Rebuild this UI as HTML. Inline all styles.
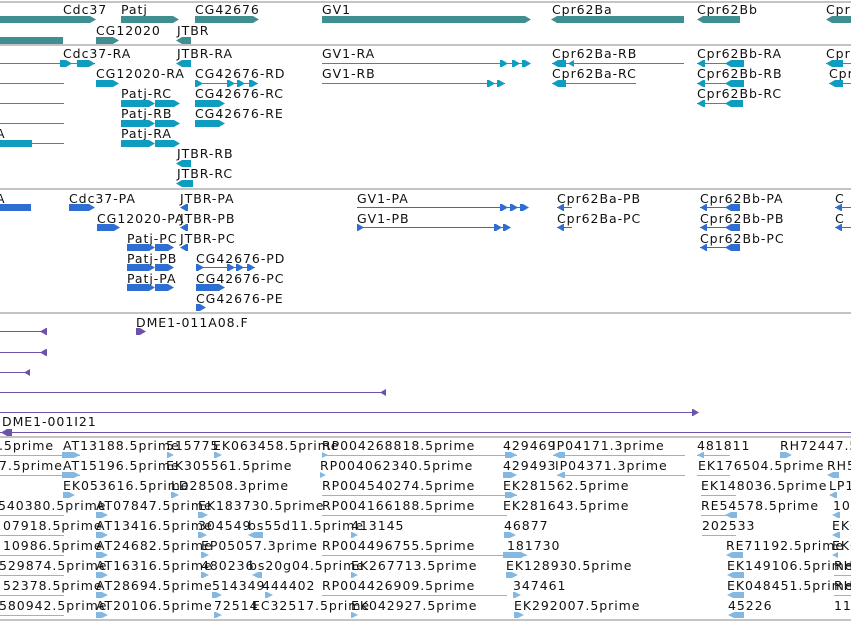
<!DOCTYPE html>
<html style="overflow:hidden"><head><meta charset="utf-8"><style>
html,body{overflow:hidden}
body{margin:0;width:851px;height:621px;background:#fff;position:relative;font-family:"DejaVu Sans","Liberation Sans",sans-serif}
#w{position:absolute;left:0;top:0;width:851px;height:621px;overflow:hidden}
.t{position:absolute;font-size:12.5px;line-height:14px;letter-spacing:.95px;white-space:nowrap;color:#111;margin-top:1px}
.s{position:absolute;left:0;width:851px;height:2px;background:#c4c4c4}
.l{position:absolute;height:1px}
.b{position:absolute;height:7px}
.ar{clip-path:polygon(0 0,calc(100% - 6px) 0,100% 50%,calc(100% - 6px) 100%,0 100%)}
.al{clip-path:polygon(6px 0,100% 0,100% 100%,6px 100%,0 50%)}
.g .l,.g .b{background:#3f8f91}
.r .l,.r .b{background:#0e9cc0}
.p .l,.p .b{background:#2e6ed2}
.u .l,.u .b{background:#6c52aa}
.e .l,.e .b{background:#84b8e0}
.e .b{height:6px}
</style></head><body><div id="w">
<div class="s" style="top:1px"></div>
<div class="s" style="top:44px"></div>
<div class="s" style="top:188px"></div>
<div class="s" style="top:312px"></div>
<div class="s" style="top:436px"></div>
<div class="s" style="top:619px"></div>

<!-- genes -->
<div class="g">
<div class="t" style="left:63px;top:2px">Cdc37</div><div class="t" style="left:121px;top:2px">Patj</div><div class="t" style="left:195px;top:2px">CG42676</div><div class="t" style="left:322px;top:2px">GV1</div><div class="t" style="left:552px;top:2px">Cpr62Ba</div><div class="t" style="left:697px;top:2px">Cpr62Bb</div><div class="t" style="left:826px;top:2px">Cpr6</div>
<div class="b ar" style="left:0;top:16px;width:96px"></div><div class="b ar" style="left:121px;top:16px;width:58px"></div><div class="b ar" style="left:195px;top:16px;width:64px"></div><div class="b ar" style="left:322px;top:16px;width:209px"></div><div class="b al" style="left:551px;top:16px;width:133px"></div><div class="b al" style="left:697px;top:16px;width:43px"></div><div class="b al" style="left:826px;top:16px;width:25px"></div>
<div class="t" style="left:96px;top:23px">CG12020</div><div class="t" style="left:177px;top:23px">JTBR</div>
<div class="b" style="left:0;top:37px;width:63px"></div><div class="b ar" style="left:96px;top:37px;width:23px"></div><div class="b al" style="left:176px;top:37px;width:15px"></div>
</div>

<!-- transcripts -->
<div class="r">
<div class="t" style="left:63px;top:46px">Cdc37-RA</div><div class="t" style="left:177px;top:46px">JTBR-RA</div><div class="t" style="left:322px;top:46px">GV1-RA</div><div class="t" style="left:552px;top:46px">Cpr62Ba-RB</div><div class="t" style="left:697px;top:46px">Cpr62Bb-RA</div><div class="t" style="left:826px;top:46px">Cpr6</div>
<div class="l" style="left:0;top:63px;width:95px"></div><div class="b ar" style="left:60px;top:60px;width:12px"></div><div class="b ar" style="left:77px;top:60px;width:18px"></div>
<div class="b al" style="left:176px;top:60px;width:15px"></div>
<div class="l" style="left:322px;top:63px;width:208px"></div><div class="b ar" style="left:500px;top:60px;width:8px"></div><div class="b ar" style="left:512px;top:60px;width:8px"></div><div class="b ar" style="left:522px;top:60px;width:9px"></div>
<div class="l" style="left:552px;top:63px;width:132px"></div><div class="b al" style="left:552px;top:60px;width:14px"></div><div class="b al" style="left:568px;top:60px;width:6px"></div>
<div class="l" style="left:697px;top:63px;width:47px"></div><div class="b al" style="left:697px;top:60px;width:8px"></div><div class="b al" style="left:725px;top:60px;width:19px"></div>
<div class="l" style="left:826px;top:63px;width:25px"></div><div class="b al" style="left:826px;top:60px;width:17px"></div>

<div class="t" style="left:96px;top:66px">CG12020-RA</div><div class="t" style="left:195px;top:66px">CG42676-RD</div><div class="t" style="left:322px;top:66px">GV1-RB</div><div class="t" style="left:552px;top:66px">Cpr62Ba-RC</div><div class="t" style="left:697px;top:66px">Cpr62Bb-RB</div><div class="t" style="left:829px;top:66px">Cpr</div>
<div class="l" style="left:0;top:83px;width:64px"></div><div class="b ar" style="left:96px;top:80px;width:23px"></div>
<div class="l" style="left:195px;top:83px;width:63px"></div><div class="b ar" style="left:195px;top:80px;width:8px"></div><div class="b ar" style="left:227px;top:80px;width:8px"></div><div class="b ar" style="left:237px;top:80px;width:8px"></div><div class="b ar" style="left:249px;top:80px;width:9px"></div>
<div class="l" style="left:322px;top:83px;width:183px"></div><div class="b ar" style="left:487px;top:80px;width:8px"></div><div class="b ar" style="left:497px;top:80px;width:8px"></div>
<div class="l" style="left:552px;top:83px;width:84px"></div><div class="b al" style="left:552px;top:80px;width:14px"></div>
<div class="l" style="left:697px;top:83px;width:47px"></div><div class="b al" style="left:697px;top:80px;width:8px"></div><div class="b al" style="left:725px;top:80px;width:19px"></div>
<div class="l" style="left:829px;top:83px;width:22px"></div><div class="b al" style="left:829px;top:80px;width:14px"></div>

<div class="t" style="left:121px;top:86px">Patj-RC</div><div class="t" style="left:195px;top:86px">CG42676-RC</div><div class="t" style="left:697px;top:86px">Cpr62Bb-RC</div>
<div class="l" style="left:0;top:103px;width:64px"></div><div class="b ar" style="left:121px;top:100px;width:34px"></div><div class="b ar" style="left:155px;top:100px;width:25px"></div><div class="b ar" style="left:195px;top:100px;width:30px"></div>
<div class="l" style="left:697px;top:103px;width:46px"></div><div class="b al" style="left:697px;top:100px;width:8px"></div><div class="b al" style="left:725px;top:100px;width:18px"></div>

<div class="t" style="left:121px;top:106px">Patj-RB</div><div class="t" style="left:195px;top:106px">CG42676-RE</div>
<div class="l" style="left:0;top:123px;width:64px"></div><div class="b ar" style="left:121px;top:120px;width:34px"></div><div class="b ar" style="left:155px;top:120px;width:25px"></div><div class="b ar" style="left:195px;top:120px;width:30px"></div>

<div class="t" style="left:-4px;top:126px">A</div><div class="t" style="left:121px;top:126px">Patj-RA</div>
<div class="l" style="left:0;top:143px;width:64px"></div><div class="b" style="left:0;top:140px;width:32px"></div><div class="b ar" style="left:121px;top:140px;width:34px"></div><div class="b ar" style="left:155px;top:140px;width:25px"></div>
<div class="t" style="left:177px;top:146px">JTBR-RB</div><div class="b al" style="left:176px;top:160px;width:15px"></div>
<div class="t" style="left:177px;top:166px">JTBR-RC</div><div class="b al" style="left:176px;top:180px;width:17px"></div>
</div>

<!-- proteins -->
<div class="p">
<div class="t" style="left:-4px;top:191px">A</div><div class="t" style="left:69px;top:191px">Cdc37-PA</div><div class="t" style="left:180px;top:191px">JTBR-PA</div><div class="t" style="left:357px;top:191px">GV1-PA</div><div class="t" style="left:557px;top:191px">Cpr62Ba-PB</div><div class="t" style="left:700px;top:191px">Cpr62Bb-PA</div><div class="t" style="left:835px;top:191px">C</div>
<div class="b" style="left:0;top:204px;width:31px"></div><div class="b ar" style="left:69px;top:204px;width:26px"></div><div class="b al" style="left:180px;top:204px;width:8px"></div>
<div class="l" style="left:357px;top:207px;width:171px"></div><div class="b ar" style="left:500px;top:204px;width:8px"></div><div class="b ar" style="left:510px;top:204px;width:8px"></div><div class="b ar" style="left:520px;top:204px;width:9px"></div>
<div class="l" style="left:557px;top:207px;width:15px"></div><div class="b al" style="left:557px;top:204px;width:7px"></div>
<div class="l" style="left:700px;top:207px;width:40px"></div><div class="b al" style="left:700px;top:204px;width:7px"></div><div class="b al" style="left:725px;top:204px;width:15px"></div>
<div class="l" style="left:835px;top:207px;width:16px"></div><div class="b al" style="left:835px;top:204px;width:7px"></div>

<div class="t" style="left:97px;top:211px">CG12020-PA</div><div class="t" style="left:180px;top:211px">JTBR-PB</div><div class="t" style="left:357px;top:211px">GV1-PB</div><div class="t" style="left:557px;top:211px">Cpr62Ba-PC</div><div class="t" style="left:700px;top:211px">Cpr62Bb-PB</div><div class="t" style="left:835px;top:211px">C</div>
<div class="b ar" style="left:97px;top:224px;width:23px"></div><div class="b al" style="left:180px;top:224px;width:8px"></div>
<div class="l" style="left:357px;top:227px;width:153px"></div><div class="b ar" style="left:357px;top:224px;width:7px"></div><div class="b ar" style="left:494px;top:224px;width:8px"></div><div class="b ar" style="left:503px;top:224px;width:8px"></div>
<div class="l" style="left:557px;top:227px;width:15px"></div><div class="b al" style="left:557px;top:224px;width:7px"></div>
<div class="l" style="left:700px;top:227px;width:40px"></div><div class="b al" style="left:700px;top:224px;width:7px"></div><div class="b al" style="left:725px;top:224px;width:15px"></div>
<div class="l" style="left:835px;top:227px;width:16px"></div><div class="b al" style="left:835px;top:224px;width:7px"></div>

<div class="t" style="left:127px;top:231px">Patj-PC</div><div class="t" style="left:180px;top:231px">JTBR-PC</div><div class="t" style="left:700px;top:231px">Cpr62Bb-PC</div>
<div class="b ar" style="left:127px;top:244px;width:28px"></div><div class="b ar" style="left:155px;top:244px;width:19px"></div><div class="b al" style="left:180px;top:244px;width:8px"></div>
<div class="l" style="left:700px;top:247px;width:40px"></div><div class="b al" style="left:700px;top:244px;width:7px"></div><div class="b al" style="left:725px;top:244px;width:15px"></div>

<div class="t" style="left:127px;top:251px">Patj-PB</div><div class="t" style="left:196px;top:251px">CG42676-PD</div>
<div class="b ar" style="left:127px;top:264px;width:28px"></div><div class="b ar" style="left:155px;top:264px;width:19px"></div>
<div class="l" style="left:196px;top:267px;width:59px"></div><div class="b ar" style="left:196px;top:264px;width:8px"></div><div class="b ar" style="left:227px;top:264px;width:8px"></div><div class="b ar" style="left:236px;top:264px;width:8px"></div><div class="b ar" style="left:247px;top:264px;width:8px"></div>

<div class="t" style="left:127px;top:271px">Patj-PA</div><div class="t" style="left:196px;top:271px">CG42676-PC</div>
<div class="b ar" style="left:127px;top:284px;width:28px"></div><div class="b ar" style="left:155px;top:284px;width:19px"></div><div class="b ar" style="left:196px;top:284px;width:29px"></div>
<div class="t" style="left:196px;top:291px">CG42676-PE</div><div class="b ar" style="left:196px;top:304px;width:10px"></div>
</div>

<!-- purple -->
<div class="u">
<div class="t" style="left:136px;top:315px">DME1-011A08.F</div><div class="b ar" style="left:136px;top:328px;width:10px"></div>
<div class="l" style="left:0;top:331px;width:47px"></div><div class="b al" style="left:40px;top:328px;width:7px"></div>
<div class="l" style="left:0;top:352px;width:47px"></div><div class="b al" style="left:40px;top:349px;width:7px"></div>
<div class="l" style="left:0;top:372px;width:30px"></div><div class="b al" style="left:24px;top:369px;width:6px"></div>
<div class="l" style="left:0;top:392px;width:385px"></div><div class="b al" style="left:380px;top:389px;width:6px"></div>
<div class="l" style="left:0;top:412px;width:698px"></div><div class="b ar" style="left:692px;top:409px;width:7px"></div>
<div class="t" style="left:2px;top:414px">DME1-001I21</div>
<div class="l" style="left:0;top:432px;width:851px"></div><div class="b al" style="left:1px;top:429px;width:11px"></div>
</div>

<!-- ESTs -->
<div class="e">
<div class="t" style="left:-1px;top:438px">.5prime</div><div class="t" style="left:63px;top:438px">AT13188.5prime</div><div class="t" style="left:166px;top:438px">515775</div><div class="t" style="left:213px;top:438px">EK063458.5prime</div><div class="t" style="left:322px;top:438px">RP004268818.5prime</div><div class="t" style="left:503px;top:438px">429469</div><div class="t" style="left:552px;top:438px">IP04171.3prime</div><div class="t" style="left:697px;top:438px">481811</div><div class="t" style="left:780px;top:438px">RH72447.5prime</div>
<div class="l" style="left:0;top:455px;width:80px"></div><div class="b ar" style="left:62px;top:452px;width:18px"></div><div class="b ar" style="left:167px;top:452px;width:7px"></div><div class="b ar" style="left:214px;top:452px;width:8px"></div><div class="l" style="left:322px;top:455px;width:195px"></div><div class="b ar" style="left:322px;top:452px;width:6px"></div><div class="b ar" style="left:505px;top:452px;width:12px"></div><div class="l" style="left:553px;top:455px;width:132px"></div><div class="b al" style="left:553px;top:452px;width:12px"></div><div class="l" style="left:697px;top:455px;width:33px"></div><div class="b al" style="left:697px;top:452px;width:7px"></div><div class="b ar" style="left:780px;top:452px;width:12px"></div>

<div class="t" style="left:-1px;top:458px">7.5prime</div><div class="t" style="left:63px;top:458px">AT15196.5prime</div><div class="t" style="left:166px;top:458px">EK305561.5prime</div><div class="t" style="left:320px;top:458px">RP004062340.5prime</div><div class="t" style="left:503px;top:458px">429493</div><div class="t" style="left:555px;top:458px">IP04371.3prime</div><div class="t" style="left:698px;top:458px">EK176504.5prime</div><div class="t" style="left:827px;top:458px">RH5</div>
<div class="l" style="left:0;top:475px;width:80px"></div><div class="b ar" style="left:62px;top:472px;width:18px"></div><div class="b ar" style="left:320px;top:472px;width:6px"></div><div class="b ar" style="left:503px;top:472px;width:14px"></div><div class="l" style="left:557px;top:475px;width:128px"></div><div class="b al" style="left:557px;top:472px;width:8px"></div><div class="l" style="left:697px;top:475px;width:33px"></div><div class="b al" style="left:827px;top:472px;width:12px"></div>

<div class="t" style="left:63px;top:478px">EK053616.5prime</div><div class="t" style="left:171px;top:478px">LD28508.3prime</div><div class="t" style="left:322px;top:478px">RP004540274.5prime</div><div class="t" style="left:503px;top:478px">EK281562.5prime</div><div class="t" style="left:701px;top:478px">EK148036.5prime</div><div class="t" style="left:829px;top:478px">LP1</div>
<div class="b ar" style="left:63px;top:492px;width:12px"></div><div class="b ar" style="left:171px;top:492px;width:8px"></div><div class="l" style="left:322px;top:495px;width:195px"></div><div class="b ar" style="left:505px;top:492px;width:12px"></div><div class="l" style="left:701px;top:495px;width:35px"></div><div class="b al" style="left:829px;top:492px;width:8px"></div>

<div class="t" style="left:-2px;top:498px">540380.5prime</div><div class="t" style="left:96px;top:498px">AT07847.5prime</div><div class="t" style="left:198px;top:498px">EK183730.5prime</div><div class="t" style="left:322px;top:498px">RP004166188.5prime</div><div class="t" style="left:503px;top:498px">EK281643.5prime</div><div class="t" style="left:701px;top:498px">RE54578.5prime</div><div class="t" style="left:833px;top:498px">107</div>
<div class="l" style="left:0;top:515px;width:64px"></div><div class="b ar" style="left:96px;top:512px;width:12px"></div><div class="b ar" style="left:198px;top:512px;width:10px"></div><div class="l" style="left:322px;top:515px;width:185px"></div><div class="l" style="left:701px;top:515px;width:35px"></div><div class="b al" style="left:725px;top:512px;width:12px"></div><div class="b al" style="left:832px;top:512px;width:8px"></div>

<div class="t" style="left:3px;top:518px">07918.5prime</div><div class="t" style="left:96px;top:518px">AT13416.5prime</div><div class="t" style="left:198px;top:518px">304549</div><div class="t" style="left:248px;top:518px">bs55d11.5prime</div><div class="t" style="left:351px;top:518px">413145</div><div class="t" style="left:504px;top:518px">46877</div><div class="t" style="left:702px;top:518px">202533</div><div class="t" style="left:832px;top:518px">EK0</div>
<div class="l" style="left:0;top:535px;width:64px"></div><div class="b ar" style="left:96px;top:532px;width:12px"></div><div class="b ar" style="left:198px;top:532px;width:9px"></div><div class="b al" style="left:248px;top:532px;width:15px"></div><div class="b ar" style="left:351px;top:532px;width:7px"></div><div class="b ar" style="left:504px;top:532px;width:12px"></div><div class="l" style="left:702px;top:535px;width:34px"></div><div class="b al" style="left:832px;top:532px;width:8px"></div>

<div class="t" style="left:3px;top:538px">10986.5prime</div><div class="t" style="left:96px;top:538px">AT24682.5prime</div><div class="t" style="left:201px;top:538px">EP05057.3prime</div><div class="t" style="left:322px;top:538px">RP004496755.5prime</div><div class="t" style="left:507px;top:538px">181730</div><div class="t" style="left:726px;top:538px">RE71192.5prime</div><div class="t" style="left:832px;top:538px">EK0</div>
<div class="l" style="left:0;top:555px;width:64px"></div><div class="b ar" style="left:96px;top:552px;width:12px"></div><div class="b ar" style="left:201px;top:552px;width:8px"></div><div class="l" style="left:322px;top:555px;width:205px"></div><div class="b ar" style="left:503px;top:552px;width:24px"></div><div class="b al" style="left:726px;top:552px;width:17px"></div><div class="b al" style="left:832px;top:552px;width:6px"></div>

<div class="t" style="left:-1px;top:558px">529874.5prime</div><div class="t" style="left:96px;top:558px">AT16316.5prime</div><div class="t" style="left:201px;top:558px">480236</div><div class="t" style="left:249px;top:558px">bs20g04.5prime</div><div class="t" style="left:351px;top:558px">EK267713.5prime</div><div class="t" style="left:506px;top:558px">EK128930.5prime</div><div class="t" style="left:727px;top:558px">EK149106.5prime</div><div class="t" style="left:834px;top:558px">RH</div>
<div class="l" style="left:0;top:575px;width:64px"></div><div class="b ar" style="left:96px;top:572px;width:12px"></div><div class="b ar" style="left:201px;top:572px;width:8px"></div><div class="b al" style="left:252px;top:572px;width:10px"></div><div class="b ar" style="left:351px;top:572px;width:7px"></div><div class="b ar" style="left:506px;top:572px;width:12px"></div><div class="b al" style="left:727px;top:572px;width:17px"></div><div class="l" style="left:834px;top:575px;width:17px"></div>

<div class="t" style="left:3px;top:578px">52378.5prime</div><div class="t" style="left:96px;top:578px">AT28694.5prime</div><div class="t" style="left:212px;top:578px">514349</div><div class="t" style="left:262px;top:578px">444402</div><div class="t" style="left:322px;top:578px">RP004426909.5prime</div><div class="t" style="left:513px;top:578px">347461</div><div class="t" style="left:727px;top:578px">EK048451.5prime</div><div class="t" style="left:834px;top:578px">RH</div>
<div class="l" style="left:0;top:595px;width:64px"></div><div class="b ar" style="left:96px;top:592px;width:12px"></div><div class="b ar" style="left:212px;top:592px;width:10px"></div><div class="b ar" style="left:265px;top:592px;width:8px"></div><div class="l" style="left:322px;top:595px;width:185px"></div><div class="b ar" style="left:513px;top:592px;width:8px"></div><div class="b al" style="left:727px;top:592px;width:17px"></div><div class="l" style="left:834px;top:595px;width:17px"></div>

<div class="t" style="left:-1px;top:598px">580942.5prime</div><div class="t" style="left:96px;top:598px">AT20106.5prime</div><div class="t" style="left:214px;top:598px">72514</div><div class="t" style="left:252px;top:598px">EC32517.5prime</div><div class="t" style="left:351px;top:598px">EK042927.5prime</div><div class="t" style="left:514px;top:598px">EK292007.5prime</div><div class="t" style="left:728px;top:598px">45226</div><div class="t" style="left:834px;top:598px">117</div>
<div class="l" style="left:0;top:615px;width:64px"></div><div class="b ar" style="left:96px;top:612px;width:12px"></div><div class="b ar" style="left:214px;top:612px;width:8px"></div><div class="b ar" style="left:351px;top:612px;width:7px"></div><div class="b ar" style="left:514px;top:612px;width:10px"></div><div class="b al" style="left:728px;top:612px;width:16px"></div>
</div>
</div></body></html>
